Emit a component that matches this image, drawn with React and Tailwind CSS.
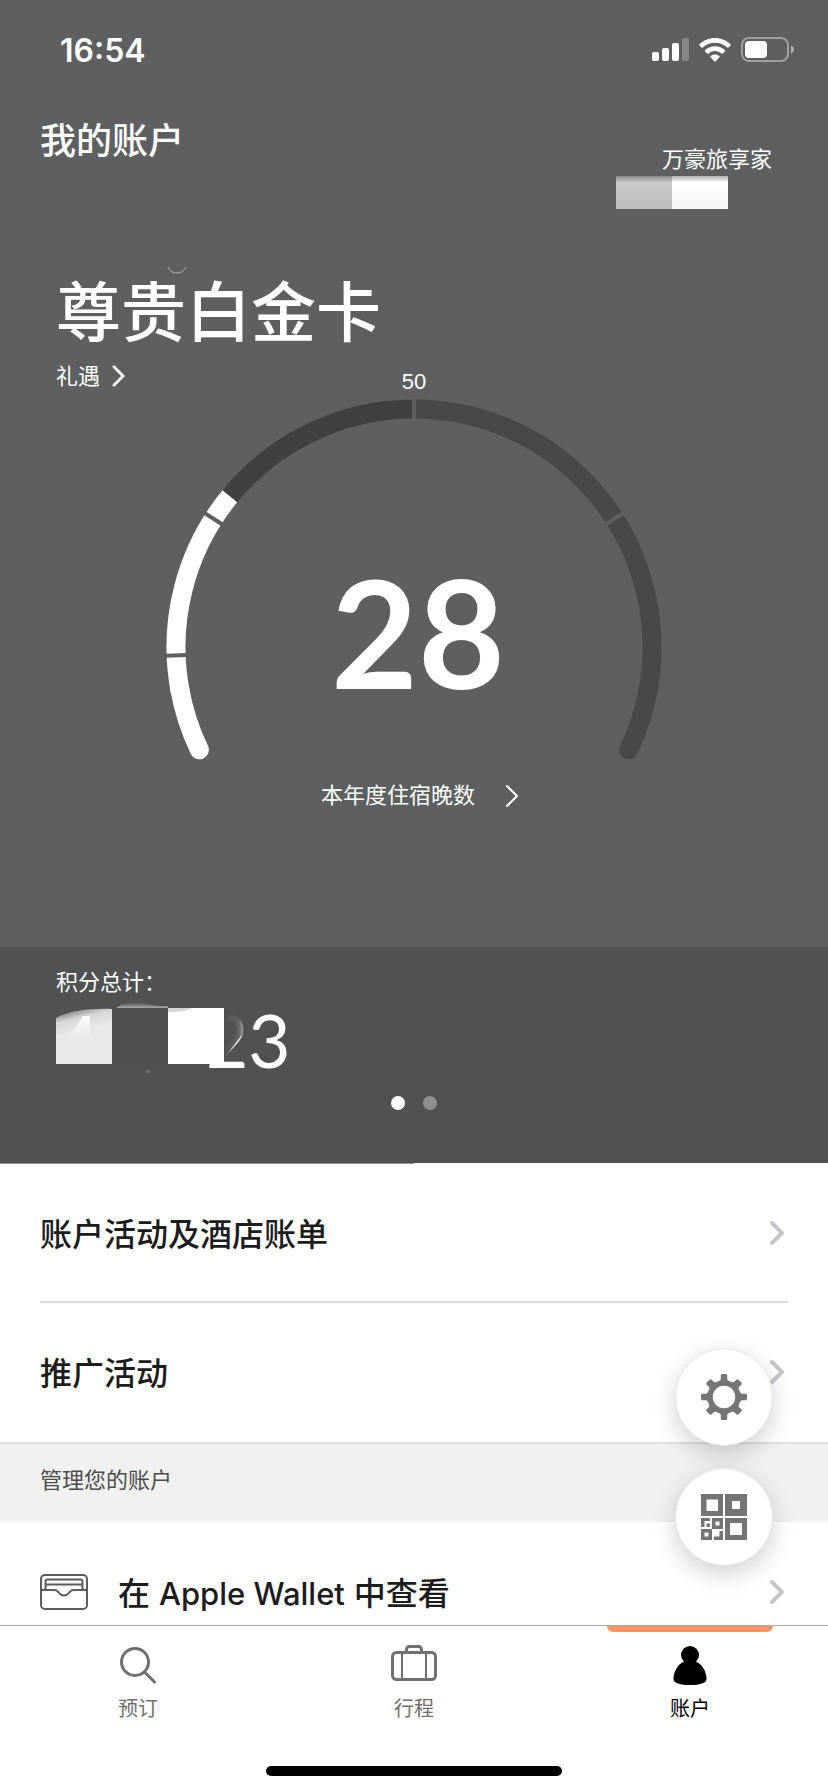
import React, { useState } from "react";

const GAUGE = { cx: 250, cy: 249, r: 238 };

// Angle is in degrees, clockwise from the top of the dial
const pointAt = (angle, radius = GAUGE.r) => {
  const rad = (angle * Math.PI) / 180;
  return [
    GAUGE.cx + radius * Math.sin(rad),
    GAUGE.cy - radius * Math.cos(rad),
  ];
};

const arcPath = (from, to) => {
  const [x1, y1] = pointAt(from);
  const [x2, y2] = pointAt(to);
  return `M${x1} ${y1}A${GAUGE.r} ${GAUGE.r} 0 0 1 ${x2} ${y2}`;
};

const Chevron = ({ className, strokeWidth = 2 }) => (
  <svg
    viewBox="0 0 14 24"
    fill="none"
    stroke="currentColor"
    strokeWidth={strokeWidth}
    strokeLinecap="round"
    className={className}
    aria-hidden="true"
  >
    <path d="M2 2 12 12 2 22" />
  </svg>
);

const StatusBar = () => (
  <div className="flex h-[100px] items-center justify-between pl-[60px] pr-[33px]">
    <span className="pt-[2px] font-['Inter',sans-serif] text-[32px] font-semibold leading-10">
      16:54
    </span>
    <div className="flex items-center gap-[10px]">
      <svg width="37" height="24" viewBox="0 0 37 24" fill="white">
        <rect x="0" y="14" width="7" height="9" rx="2" />
        <rect x="10" y="10" width="7" height="13" rx="2" />
        <rect x="20" y="5" width="7" height="18" rx="2" />
        <rect x="30" y="0" width="7" height="23" rx="2" opacity="0.25" />
      </svg>
      <svg width="32" height="24" viewBox="0 0 32 24" fill="white">
        <path d="M16 0C22 0 27.500 2.400 31.500 6.200c.4.400.4.900 0 1.300l-2 2c-.4.400-.9.400-1.300 0C25 6.500 20.700 4.700 16 4.700S7 6.500 3.800 9.500c-.4.400-.9.400-1.300 0l-2-2c-.4-.4-.4-.9 0-1.300C4.500 2.400 10 0 16 0z" />
        <path d="M16 8.200c3.800 0 7.300 1.500 9.900 3.900.4.400.4.900 0 1.300l-2.100 2.100c-.4.400-.9.400-1.300 0-1.700-1.600-4-2.500-6.500-2.500s-4.800.9-6.500 2.500c-.4.400-.9.400-1.300 0l-2.100-2.100c-.4-.4-.4-.9 0-1.300 2.600-2.400 6.100-3.900 9.900-3.900z" />
        <path d="M16 16.400c1.700 0 3.200.6 4.400 1.600.4.400.4.900 0 1.300l-3.700 4c-.4.400-1 .4-1.400 0l-3.700-4c-.4-.4-.4-.9 0-1.300 1.200-1 2.700-1.600 4.400-1.600z" />
      </svg>
      <svg width="54" height="26" viewBox="0 0 54 26" fill="none">
        <rect
          x="1"
          y="1"
          width="46"
          height="23"
          rx="7"
          stroke="white"
          strokeOpacity="0.4"
          strokeWidth="2"
        />
        <rect x="4" y="4" width="22" height="17" rx="4" fill="white" />
        <path d="M50 8.500c2 .8 3 2.300 3 4s-1 3.200-3 4z" fill="white" opacity="0.5" />
      </svg>
    </div>
  </div>
);

const NightsGauge = () => (
  <div className="grid justify-center">
    <svg
      viewBox="0 0 500 363"
      className="col-start-1 row-start-1 h-[363px] w-[500px]"
      fill="none"
      strokeWidth="19"
      aria-hidden="true"
    >
      <path d={arcPath(100, 115.6)} stroke="#47484a" strokeLinecap="round" />
      <path d={arcPath(0, 101)} stroke="#47484a" />
      <path d={arcPath(-52, 0)} stroke="#3f4042" />
      <path d={arcPath(-115.6, -100)} stroke="white" strokeLinecap="round" />
      <path d={arcPath(-101, -50.7)} stroke="white" />
      {/* Separators between the tiers */}
      {[-92, -57.4, 0, 57.4].map((angle) => {
        const [x1, y1] = pointAt(angle, 226);
        const [x2, y2] = pointAt(angle, 250);
        return (
          <line
            key={angle}
            x1={x1}
            y1={y1}
            x2={x2}
            y2={y2}
            stroke="#5e5f61"
            strokeWidth="4"
          />
        );
      })}
    </svg>
    <p className="col-start-1 row-start-1 pl-2 pt-[158px] text-center font-['Lato',sans-serif] text-[150px] font-bold leading-[150px]">
      28
    </p>
  </div>
);

const Points = () => (
  <div className="relative h-[76px]">
    <p className="pl-[150px] font-['Lato',sans-serif] text-[73px] leading-[82px]">
      23
    </p>
    {/* Masked digits */}
    <svg
      className="absolute left-0 top-0"
      width="200"
      height="80"
      viewBox="0 0 200 80"
      aria-hidden="true"
    >
      <defs>
        <linearGradient id="fadeTwo" x1="0" y1="0" x2="1" y2="0">
          <stop offset="0.5" stopColor="#505153" />
          <stop offset="0.85" stopColor="#505153" stopOpacity="0.9" />
          <stop offset="1" stopColor="#505153" stopOpacity="0.4" />
        </linearGradient>
        <linearGradient id="fadeFour" x1="0" y1="0" x2="0.25" y2="1">
          <stop offset="0" stopColor="#505153" />
          <stop offset="0.25" stopColor="#d8d8da" />
          <stop offset="0.5" stopColor="#e9e9eb" />
        </linearGradient>
        <linearGradient id="fadeCap" x1="0" y1="0" x2="0" y2="1">
          <stop offset="0" stopColor="#505153" />
          <stop offset="1" stopColor="#a9a9ab" />
        </linearGradient>
        <linearGradient id="digit" x1="0" y1="0" x2="0" y2="1">
          <stop offset="0" stopColor="white" />
          <stop offset="1" stopColor="white" stopOpacity="0" />
        </linearGradient>
      </defs>
      <path d="M148 10h41v22l-20 26h-21z" fill="url(#fadeTwo)" />
      <path d="M0 19C12 12 32 9 56 10v55H0z" fill="url(#fadeFour)" />
      <path d="M27 17h7v22H12z" fill="url(#digit)" />
      <path d="M60 9c8-6 22-7 34-3 6 1 12 1 18 1v2z" fill="url(#fadeCap)" />
      <rect x="56" y="9" width="56" height="56" fill="#4d4e50" />
      <rect x="112" y="9" width="56" height="56" fill="white" />
      <path d="M112 9h24c-6 3-14 4-24 4z" fill="#d5d5d7" />
      <path d="M90 73l2-3 3 2-3 3z" fill="#6b6c6e" />
    </svg>
  </div>
);

const WalletIcon = () => (
  <svg
    width="48"
    height="36"
    viewBox="0 0 48 36"
    fill="none"
    stroke="#5c5c5c"
    strokeWidth="2"
    strokeLinejoin="round"
    aria-hidden="true"
  >
    <rect x="1" y="1" width="46" height="34" rx="4" />
    <path d="M5.500 16V7.500a2 2 0 0 1 2-2h33a2 2 0 0 1 2 2V16M5.500 10.500h37" />
    <path d="M1 16h14c2 0 2.500 1 4 3s3 2.500 5 2.500 3.500-.5 5-2.500 2-3 4-3h14" />
  </svg>
);

const GearIcon = () => (
  <svg width="46" height="46" viewBox="-23 -23 46 46" aria-hidden="true">
    <circle r="14" fill="none" stroke="#757575" strokeWidth="5.500" />
    {[0, 45, 90, 135, 180, 225, 270, 315].map((angle) => (
      <path
        key={angle}
        transform={`rotate(${angle})`}
        fill="#757575"
        d={
          angle % 90 === 0
            ? "M-6.500-15.300C-4-16-3.200-17-3.200-18.500V-21.500Q-3.200-23-1.700-23H1.700Q3.200-23 3.200-21.500V-18.500C3.200-17 4-16 6.500-15.300z"
            : "M-6-15C-4-16-3.500-17-3.500-18V-21Q-3.500-22.500-2-22.500H2Q3.500-22.500 3.500-21V-18C3.500-17 4-16 6-15z"
        }
      />
    ))}
  </svg>
);

const QrIcon = () => (
  <svg
    width="46"
    height="46"
    viewBox="0 0 46 46"
    fill="#757575"
    fillRule="evenodd"
    aria-hidden="true"
  >
    <path d="M0 0h22v22H0zM5.500 5.500v11.500h11.500V5.500z" />
    <path d="M24 0h22v22H24zM31 7v8h8V7z" />
    <path d="M24 24h22v22H24zM29 29v12h12V29z" />
    <path d="M11 24h11v11H11zM14.500 27.500v4h4v-4z" />
    <path d="M0 35h11v11H0zM3.500 38.500v4h4v-4z" />
    <path d="M0 24h9v3H3.500v6H0zM5.500 29.500H9V33H5.500z" />
    <path d="M18.500 37H22v9h-9v-3.500h5.500z" />
  </svg>
);

const SearchIcon = () => (
  <svg
    width="40"
    height="40"
    viewBox="0 0 40 40"
    fill="none"
    stroke="#707070"
    strokeWidth="3"
    aria-hidden="true"
  >
    <circle cx="17" cy="17" r="13.500" />
    <path d="M26.500 27 36.500 37" strokeLinecap="round" />
  </svg>
);

const SuitcaseIcon = () => (
  <svg
    width="46"
    height="40"
    viewBox="0 0 46 40"
    fill="none"
    stroke="#707070"
    strokeWidth="3"
    aria-hidden="true"
  >
    <rect x="1.500" y="7.500" width="43" height="27" rx="4" />
    <path d="M15.500 7V4.500a3 3 0 0 1 3-3h9a3 3 0 0 1 3 3V7" />
    <path d="M11 7.500v27M35 7.500v27" strokeWidth="2" />
  </svg>
);

const PersonIcon = () => (
  <svg width="34" height="40" viewBox="0 0 34 40" aria-hidden="true">
    <circle cx="17" cy="10" r="9" />
    <path d="M11 16.500C5 19 .5 26.500.5 34c0 4 7 6 16.500 6s16.500-2 16.500-6C33.500 26.500 29 19 23 16.500z" />
  </svg>
);

const tabs = [
  { id: "book", label: "预订", icon: <SearchIcon /> },
  { id: "trips", label: "行程", icon: <SuitcaseIcon /> },
  { id: "account", label: "账户", icon: <PersonIcon /> },
];

const App = () => {
  const [activeTab, setActiveTab] = useState("account");

  return (
    <div className="flex min-h-screen flex-col bg-white font-['Liberation_Sans','Noto_Sans_CJK_SC',sans-serif] text-[#1c1c1c]">
      <header className="bg-[#5e5f61] pb-[135px] text-white">
        <StatusBar />

        <div className="flex justify-between pl-10 pr-14 pt-3">
          <h1 className="text-[36px] font-medium leading-[59px]">我的账户</h1>
          <div className="flex flex-col items-end pt-8 text-[22px] leading-8">
            <p>万豪旅享家</p>
            {/* Masked member number */}
            <div className="mr-11 flex h-[33px]">
              <div className="w-14 bg-linear-to-b from-[#8a8b8d] via-[#c9c9cb] via-20% to-[#bcbcbe]" />
              <div className="w-14 bg-linear-to-b from-[#b0b0b2] via-white via-20% to-[#f4f4f4]" />
            </div>
          </div>
        </div>

        <div className="px-14">
          <svg
            className="ml-[111px] mt-[55px] block"
            width="20"
            height="10"
            viewBox="0 0 20 10"
            fill="none"
            stroke="#b4b5b7"
            aria-hidden="true"
          >
            <path d="M1 3c2 4 5 6 9 6s7-2 9-6" />
          </svg>
          <h2 className="text-[65px] font-medium leading-[80px]">
            尊贵白金卡
          </h2>
          <div className="mt-[5px] grid grid-cols-3 text-[22px] leading-8">
            <a href="#benefits" className="flex items-start gap-3 pt-[2px]">
              礼遇
              <Chevron className="mt-1 h-[22px] w-[13px]" strokeWidth={3} />
            </a>
            <p className="pt-[7px] text-center">50</p>
          </div>
        </div>

        <NightsGauge />

        <a
          href="#nights"
          className="mt-[19px] flex items-center justify-center gap-[30px] pl-3 text-[22px] leading-8"
        >
          本年度住宿晚数
          <Chevron className="h-6 w-[14px]" />
        </a>
      </header>

      <section className="bg-[#505153] px-14 pb-[53px] pt-5 text-white">
        <p className="text-[22px] leading-8">积分总计：</p>
        <Points />
        <div className="mt-[21px] flex justify-center gap-[18px]">
          <button
            aria-label="第 1 页"
            className="h-[14px] w-[14px] rounded-full bg-white"
          />
          <button
            aria-label="第 2 页"
            className="h-[14px] w-[14px] rounded-full bg-[#8e8f91]"
          />
        </div>
      </section>

      <main className="relative text-[32px] font-medium leading-10">
        <div className="h-px w-1/2 bg-[#949496]" />
        <a
          href="#activity"
          className="mx-10 flex h-[139px] items-center justify-between border-b-2 border-[#dcdcdd] pr-1"
        >
          <span className="pt-1">账户活动及酒店账单</span>
          <Chevron className="h-6 w-[14px] text-[#c5c5ca]" strokeWidth={4} />
        </a>
        <a
          href="#promotions"
          className="mx-10 flex h-[139px] items-center justify-between pb-[2px] pr-1"
        >
          <span className="pt-1">推广活动</span>
          <Chevron className="h-6 w-[14px] text-[#c5c5ca]" strokeWidth={4} />
        </a>
        <h3 className="border-t-2 border-[#e0e0e0] bg-[#f1f1f1] px-10 pb-[25px] pt-[21px] text-[22px] font-normal leading-8 text-[#4c4c4c]">
          管理您的账户
        </h3>
        <a
          href="#wallet"
          className="mx-10 flex items-center pb-[11px] pr-1 pt-12"
        >
          <WalletIcon />
          <span className="ml-[30px] flex-1 pt-1">
            在{" "}
            <span className="font-['Inter',sans-serif] text-[31px]">
              Apple Wallet
            </span>{" "}
            中查看
          </span>
          <Chevron className="h-6 w-[14px] text-[#c5c5ca]" strokeWidth={4} />
        </a>

        {/* Floating actions */}
        <div className="absolute right-[55px] top-[185px] flex flex-col gap-[22px]">
          <button
            aria-label="设置"
            className="flex h-[98px] w-[98px] items-center justify-center rounded-full border border-[#e6e6e6] bg-white shadow-[0_8px_24px_rgba(0,0,0,0.18)]"
          >
            <GearIcon />
          </button>
          <button
            aria-label="二维码"
            className="flex h-[98px] w-[98px] items-center justify-center rounded-full border border-[#e6e6e6] bg-white shadow-[0_8px_24px_rgba(0,0,0,0.18)]"
          >
            <QrIcon />
          </button>
        </div>
      </main>

      <nav className="relative mt-auto border-t border-[#a9aaac] bg-white pb-4">
        <div className="grid grid-cols-3">
          {tabs.map((tab) => (
            <button
              key={tab.id}
              onClick={() => setActiveTab(tab.id)}
              className={`flex flex-col items-center text-[20px] leading-7 ${
                activeTab === tab.id ? "text-black" : "text-[#707070]"
              }`}
            >
              <span
                className={`mb-[13px] h-[6px] w-3/5 rounded-b-md ${
                  activeTab === tab.id ? "bg-[#fe9663]" : "bg-transparent"
                }`}
              />
              {tab.icon}
              <span className="mt-[10px]">{tab.label}</span>
            </button>
          ))}
        </div>
        <div className="mx-auto mt-[43px] h-[10px] w-[296px] rounded-full bg-black" />
      </nav>
    </div>
  );
};

export default App;
